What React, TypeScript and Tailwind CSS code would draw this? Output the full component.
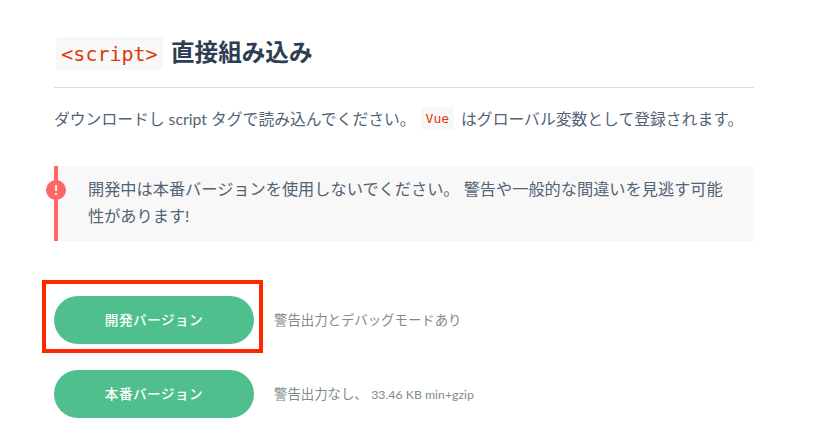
import React from 'react';

export default function App() {
  return (
    <div className="w-[837px] h-[436px] overflow-hidden bg-white pl-[54px] pt-[37px] text-[#34495e] font-['Lato','Noto_Sans_CJK_JP',sans-serif]">
      <div className="w-[700px]">
        {/* Heading */}
        <h3 className="flex items-center h-[51px] pb-[18px] border-b border-[#dddddd] text-[#2c3e50] text-[23.6px] leading-[33px] font-semibold">
          <code className="ml-[2px] mr-[8px] w-[107px] h-[33px] rounded-[2px] bg-[#f8f8f8] text-center font-['DejaVu_Sans_Mono',monospace] text-[20px] leading-[35px] font-normal text-[#de3a0c]">
            &lt;script&gt;
          </code>
          <span className="translate-y-[-1px]">直接組み込み</span>
        </h3>

        {/* Intro */}
        <p className="mt-[17px] flex items-center h-[27px] text-[15.8px] text-[#526374] whitespace-nowrap">
          <span>ダウンロードし script タグで読み込んでください。</span>
          <code className="ml-[5px] mr-[7px] px-[5px] h-[23px] rounded-[2px] bg-[#f8f8f8] text-[#de3a0c] font-['DejaVu_Sans_Mono',monospace] text-[13px] leading-[23px]">
            Vue
          </code>
          <span>はグローバル変数として登録されます。</span>
        </p>

        {/* Warning */}
        <div className="relative mt-[34px] h-[75px] border-l-4 border-[#ff6666] bg-[#f8f8f8] pl-[30px] pr-[24px] pt-[9px] text-[16.2px] leading-[27px] text-[#526374]">
          <span className="absolute left-[-12px] top-[14px] flex h-5 w-5 items-center justify-center rounded-full bg-[#ff6666] text-[13px] font-bold leading-none text-white">
            !
          </span>
          開発中は本番バージョンを使用しないでください。 警告や一般的な間違いを見逃す可能性があります!
        </div>

        {/* Downloads */}
        <div className="mt-[55px] flex flex-col gap-[26px]">
          <div className="flex items-center">
            <div className="relative">
              <a className="flex h-[48px] w-[200px] items-center justify-center rounded-full bg-[#4fc08d] text-[13.6px] font-medium tracking-[0.5px] text-white">
                開発バージョン
              </a>
              <div className="absolute left-[-12px] top-[-16px] h-[73px] w-[221px] border-[4px] border-[#ff2600]" />
            </div>
            <span className="ml-[20px] text-[13.4px] text-[#7f8c8d]">警告出力とデバッグモードあり</span>
          </div>
          <div className="flex items-center">
            <a className="flex h-[48px] w-[200px] items-center justify-center rounded-full bg-[#4fc08d] text-[13.6px] font-medium tracking-[0.5px] text-white">
              本番バージョン
            </a>
            <span className="ml-[20px] text-[13.4px] text-[#7f8c8d]">
              警告出力なし、 <span className="text-[12.3px]">33.46 KB min+gzip</span>
            </span>
          </div>
        </div>
      </div>
    </div>
  );
}
